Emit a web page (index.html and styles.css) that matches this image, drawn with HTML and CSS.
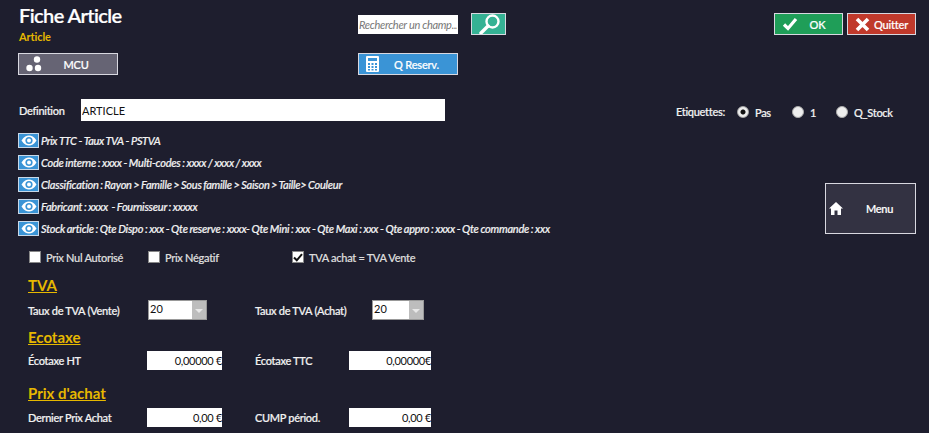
FILE: index.html
```html
<!DOCTYPE html>
<html lang="fr">
<head>
<meta charset="utf-8">
<title>Fiche Article</title>
<link rel="stylesheet" href="styles.css">
</head>
<body>
	<div class="top">
		<div class="top_left">
			<h1>Fiche Article</h1>
			<div class="subtitle">Article</div>
			<button class="btn btn_grey btn_big">
				<svg class="btn_icon" width="18" height="16" viewBox="0 0 18 16"><circle cx="11" cy="3.5" r="3.2" fill="#fff"/><circle cx="3.5" cy="12" r="3.2" fill="#fff"/><circle cx="12" cy="12" r="3.2" fill="#fff"/></svg>
				<span>MCU</span>
			</button>
		</div>
		<div class="top_center">
			<div class="search_row">
				<input class="search" type="text" placeholder="Rechercher un champ...">
				<button class="search_btn">
					<svg width="30" height="20" viewBox="0 0 30 20"><circle cx="18.5" cy="7.5" r="6" fill="none" stroke="#fff" stroke-width="2.4"/><path d="M14 12 L7 19" stroke="#fff" stroke-width="3.4" stroke-linecap="round"/></svg>
				</button>
			</div>
			<button class="btn btn_blue btn_big">
				<svg class="btn_icon" width="13" height="16" viewBox="0 0 13 16"><path fill="#fff" fill-rule="evenodd" d="M1 0h11a1 1 0 0 1 1 1v14a1 1 0 0 1-1 1H1a1 1 0 0 1-1-1V1a1 1 0 0 1 1-1zM2 2v3h9V2zM2 7v2h2V7zM5.500 7v2h2V7zM9 7v2h2V7zM2 10v2h2v-2zM5.500 10v2h2v-2zM9 10v2h2v-2zM2 13v1.500h2V13zM5.500 13v1.500h2V13zM9 13v1.500h2V13z"/></svg>
				<span>Q Reserv.</span>
			</button>
		</div>
		<div class="top_right">
			<button class="btn btn_green">
				<svg class="btn_icon" width="16" height="14" viewBox="0 0 16 14"><path d="M2 7.500 L6 11.500 L14 2" fill="none" stroke="#fff" stroke-width="3.200"/></svg>
				<span>OK</span>
			</button>
			<button class="btn btn_red">
				<svg class="btn_icon" width="15" height="15" viewBox="0 0 15 15"><path d="M2 2 L13 13 M13 2 L2 13" stroke="#fff" stroke-width="3.600"/></svg>
				<span>Quitter</span>
			</button>
		</div>
	</div>

	<div class="definition_row">
		<label class="definition_label">Definition</label>
		<input class="definition" type="text" value="ARTICLE">
		<div class="etiquettes">
			<span class="etiquettes_label">Etiquettes:</span>
			<label class="radio_item radio_pas"><span class="radio radio_on"></span>Pas</label>
			<label class="radio_item radio_un"><span class="radio"></span>1</label>
			<label class="radio_item"><span class="radio"></span>Q_Stock</label>
		</div>
	</div>

	<div class="info_block">
		<div class="info_list">
			<div class="info_row"><span class="eye"><svg width="16" height="11" viewBox="0 0 16 11"><path d="M0.500 5.500 C3 1.500 5.500 0.500 8 0.500 C10.500 0.500 13 1.500 15.500 5.500 C13 9.500 10.500 10.500 8 10.500 C5.500 10.500 3 9.500 0.500 5.500Z" fill="#fff"/><circle cx="8" cy="5.500" r="3.600" fill="#3a94d6"/><circle cx="8" cy="5.500" r="2" fill="#fff"/></svg></span><em class="info_caps">Prix TTC - Taux TVA - PSTVA</em></div>
			<div class="info_row"><span class="eye"><svg width="16" height="11" viewBox="0 0 16 11"><path d="M0.500 5.500 C3 1.500 5.500 0.500 8 0.500 C10.500 0.500 13 1.500 15.500 5.500 C13 9.500 10.500 10.500 8 10.500 C5.500 10.500 3 9.500 0.500 5.500Z" fill="#fff"/><circle cx="8" cy="5.500" r="3.600" fill="#3a94d6"/><circle cx="8" cy="5.500" r="2" fill="#fff"/></svg></span><em>Code interne : xxxx - Multi-codes : xxxx / xxxx / xxxx</em></div>
			<div class="info_row"><span class="eye"><svg width="16" height="11" viewBox="0 0 16 11"><path d="M0.500 5.500 C3 1.500 5.500 0.500 8 0.500 C10.500 0.500 13 1.500 15.500 5.500 C13 9.500 10.500 10.500 8 10.500 C5.500 10.500 3 9.500 0.500 5.500Z" fill="#fff"/><circle cx="8" cy="5.500" r="3.600" fill="#3a94d6"/><circle cx="8" cy="5.500" r="2" fill="#fff"/></svg></span><em class="info_class">Classification : Rayon &gt; Famille &gt; Sous famille &gt; Saison &gt; Taille&gt; Couleur</em></div>
			<div class="info_row"><span class="eye"><svg width="16" height="11" viewBox="0 0 16 11"><path d="M0.500 5.500 C3 1.500 5.500 0.500 8 0.500 C10.500 0.500 13 1.500 15.500 5.500 C13 9.500 10.500 10.500 8 10.500 C5.500 10.500 3 9.500 0.500 5.500Z" fill="#fff"/><circle cx="8" cy="5.500" r="3.600" fill="#3a94d6"/><circle cx="8" cy="5.500" r="2" fill="#fff"/></svg></span><em>Fabricant : xxxx &nbsp;- Fournisseur : xxxxx</em></div>
			<div class="info_row"><span class="eye"><svg width="16" height="11" viewBox="0 0 16 11"><path d="M0.500 5.500 C3 1.500 5.500 0.500 8 0.500 C10.500 0.500 13 1.500 15.500 5.500 C13 9.500 10.500 10.500 8 10.500 C5.500 10.500 3 9.500 0.500 5.500Z" fill="#fff"/><circle cx="8" cy="5.500" r="3.600" fill="#3a94d6"/><circle cx="8" cy="5.500" r="2" fill="#fff"/></svg></span><em>Stock article : Qte Dispo : xxx - Qte reserve : xxxx- Qte Mini : xxx - Qte Maxi : xxx - Qte appro : xxxx - Qte commande : xxx</em></div>
		</div>
		<button class="menu_btn">
			<svg width="14" height="13" viewBox="0 0 14 13"><path fill="#fff" d="M7 0 L14 6.500 H12 V13 H8.500 V8.500 H5.500 V13 H2 V6.500 H0Z"/></svg>
			<span>Menu</span>
		</button>
	</div>

	<div class="checks">
		<label class="check check_nul"><span class="box"></span>Prix Nul Autorisé</label>
		<label class="check check_neg"><span class="box"></span>Prix Négatif</label>
		<label class="check"><span class="box box_on"><svg width="10" height="9" viewBox="0 0 10 9"><path d="M1 4.500 L3.800 7.300 L9 1.200" fill="none" stroke="#111" stroke-width="2"/></svg></span>TVA achat = TVA Vente</label>
	</div>

	<div class="form">
		<h2>TVA</h2>
		<div class="form_row form_row_tva">
			<label class="col_a">Taux de TVA (Vente)</label>
			<span class="combo col_b"><span class="combo_val">20</span><span class="combo_arrow"></span></span>
			<label class="col_c col_c_wide">Taux de TVA (Achat)</label>
			<span class="combo combo_small"><span class="combo_val">20</span><span class="combo_arrow"></span></span>
		</div>
		<h2 class="h_eco">Ecotaxe</h2>
		<div class="form_row form_row_eco">
			<label class="col_a">Écotaxe HT</label>
			<span class="col_b"><input class="amount amount_a" type="text" value="0,00000 €"></span>
			<label class="col_c">Écotaxe TTC</label>
			<input class="amount amount_b" type="text" value="0,00000€">
		</div>
		<h2 class="h_achat">Prix d'achat</h2>
		<div class="form_row form_row_achat">
			<label class="col_a">Dernier Prix Achat</label>
			<span class="col_b"><input class="amount amount_a" type="text" value="0,00 €"></span>
			<label class="col_c">CUMP périod.</label>
			<input class="amount amount_b" type="text" value="0,00 €">
		</div>
	</div>
</body>
</html>
```

FILE: styles.css
```css
* {
	box-sizing: border-box;
	font-family: "Lato", "Liberation Sans", sans-serif;
}

html, body {
	height: 100%;
	overflow: hidden;
}

body {
	margin: 0;
	background-color: #1e1e2e;
	color: #f2f2f2;
	font-size: 11px;
	font-weight: 500;
	letter-spacing: -0.3px;
	-webkit-text-stroke: 0.2px currentColor;
}

button {
	padding: 0;
	cursor: pointer;
}

input {
	border: 0;
	outline: 0;
	margin: 0;
	background: white;
	-webkit-text-stroke: 0;
}

/* top bar */
.top {
	display: flex;
	height: 99px;
	padding-left: 18px;
}

.top_left {
	width: 340px;
}

h1 {
	margin: 3px 0 0 1px;
	font-size: 20px;
	line-height: 25px;
	font-weight: 600;
	letter-spacing: -0.6px;
	color: white;
}

.subtitle {
	margin: 2px 0 0 1px;
	height: 14px;
	line-height: 14px;
	color: #e6b800;
	font-size: 11px;
	font-weight: 700;
	letter-spacing: -0.1px;
	-webkit-text-stroke: 0;
}

.btn {
	display: flex;
	align-items: center;
	width: 69px;
	height: 22px;
	color: white;
	font-size: 11px;
	font-weight: 500;
	letter-spacing: -0.2px;
	border: 1px solid #d8d8e0;
	-webkit-text-stroke: 0.2px currentColor;
}

.btn span {
	flex: 1;
	text-align: center;
}

.btn_icon {
	flex: none;
	margin-left: 7px;
}

.btn_big {
	width: 100px;
}

.btn_grey {
	margin-top: 9px;
	padding-right: 9px;
	background: #666474;
}

.btn_blue {
	padding-right: 3px;
	background: #3a94d6;
}

.btn_green {
	padding-right: 5px;
	background: #1f9e58;
}

.btn_red {
	padding-right: 3px;
	background: #c0392b;
}

.top_center {
	width: 416px;
	padding-top: 13px;
}

.search_row {
	display: flex;
	align-items: center;
	height: 22px;
	margin-bottom: 18px;
}

.search {
	width: 100px;
	height: 19px;
	padding: 0 1px;
	font-size: 11px;
	font-style: italic;
	font-weight: 400;
	letter-spacing: -0.3px;
}

.search::placeholder {
	color: #777;
}

.search_btn {
	display: flex;
	align-items: center;
	justify-content: center;
	width: 35px;
	height: 22px;
	margin-left: 13px;
	background: #35b294;
	border: 1px solid #d8d8e0;
}

.top_right {
	display: flex;
	gap: 4px;
	padding-top: 13px;
}

/* definition + etiquettes */
.definition_row {
	display: flex;
	align-items: center;
	height: 22px;
	padding-left: 19px;
}

.definition_label {
	width: 62px;
}

.definition {
	width: 364px;
	height: 22px;
	padding: 0 1px;
	font-size: 11px;
	font-weight: 400;
	color: #111;
}

.etiquettes {
	display: flex;
	align-items: center;
	margin-left: 231px;
	padding-top: 3px;
}

.etiquettes_label {
	width: 61px;
}

.radio_item {
	display: flex;
	align-items: center;
	padding-top: 1px;
}

.radio_pas {
	width: 55px;
}

.radio_un {
	width: 44px;
}

.radio {
	width: 12px;
	height: 12px;
	margin-right: 6px;
	border-radius: 50%;
	background: #eee;
	border: 1px solid #aaa;
}

.radio_on {
	background: radial-gradient(circle, #111 0 2px, #eee 3px);
}

/* eye rows */
.info_block {
	position: relative;
	height: 126px;
	padding: 12px 0 0 18px;
}

.info_row {
	display: flex;
	align-items: center;
	height: 15px;
	margin-bottom: 7px;
}

.info_row em {
	margin-left: 2px;
	padding-bottom: 1px;
	font-size: 11px;
	font-weight: 500;
	font-style: italic;
	letter-spacing: -0.25px;
	word-spacing: -0.5px;
	white-space: nowrap;
}

.info_row .info_caps {
	letter-spacing: -0.4px;
	word-spacing: 0;
}

.info_row .info_class {
	word-spacing: -0.7px;
}

.eye {
	display: flex;
	align-items: center;
	justify-content: center;
	width: 21px;
	height: 15px;
	background: #3a94d6;
	border: 1px solid #c8d8e8;
}

.menu_btn {
	position: absolute;
	left: 825px;
	top: 62px;
	display: flex;
	align-items: center;
	width: 91px;
	height: 51px;
	padding-left: 3px;
	background: #333242;
	border: 1px solid #d8d8e0;
	color: white;
	font-size: 11px;
	font-weight: 500;
	letter-spacing: -0.3px;
	-webkit-text-stroke: 0.2px currentColor;
}

.menu_btn span {
	margin-left: 23px;
}

/* checkboxes */
.checks {
	display: flex;
	align-items: center;
	height: 20px;
	padding-left: 29px;
}

.check {
	display: flex;
	align-items: center;
	color: #ddd;
}

.check_nul {
	width: 119px;
}

.check_neg {
	width: 144px;
}

.box {
	display: flex;
	align-items: center;
	justify-content: center;
	width: 12px;
	height: 12px;
	margin-right: 5px;
	background: white;
	border: 1px solid #888;
}

/* form */
.form {
	padding-left: 28px;
}

h2 {
	margin: 0;
	width: max-content;
	font-size: 15px;
	line-height: 18px;
	font-weight: 700;
	letter-spacing: 0;
	color: #e6b800;
	text-decoration: underline;
	-webkit-text-stroke: 0;
}

.form h2:first-child {
	margin-top: 9px;
}

.h_eco {
	margin-top: 8px;
}

.h_achat {
	margin-top: 14px;
}

.form_row {
	display: flex;
	align-items: center;
}

.form_row_tva {
	height: 20px;
	margin-top: 6px;
}

.form_row_eco {
	height: 19px;
	margin-top: 5px;
}

.form_row_achat {
	height: 18px;
	margin-top: 6px;
}

.col_a {
	width: 119px;
}

.col_b {
	display: block;
	width: 108px;
}

.col_c {
	width: 94px;
}

.col_c_wide {
	width: 117px;
}

.combo {
	display: flex;
	height: 20px;
	background: white;
	border: 1px solid #999;
	color: #111;
	font-family: "Liberation Sans", sans-serif;
	font-weight: 400;
	font-size: 11px;
	letter-spacing: 0;
	-webkit-text-stroke: 0;
}

.form_row .combo.col_b {
	width: 59px;
	margin-left: 1px;
	margin-right: 48px;
}

.combo_small {
	width: 52px;
}

.combo_val {
	flex: 1;
	padding-left: 1px;
	line-height: 15px;
}

.combo_arrow {
	position: relative;
	width: 14px;
	background: #bdbdbd;
}

.combo_arrow::after {
	content: "";
	position: absolute;
	left: 3px;
	top: 8px;
	border: 4px solid transparent;
	border-top-color: #e8e8e8;
	border-bottom: 0;
}

.amount {
	display: block;
	height: 100%;
	text-align: right;
	font-size: 11px;
	font-weight: 400;
	letter-spacing: -0.3px;
	color: #111;
	padding: 0;
}

.amount_a {
	width: 75px;
	height: 19px;
}

.amount_b {
	width: 82px;
	height: 19px;
}
```
